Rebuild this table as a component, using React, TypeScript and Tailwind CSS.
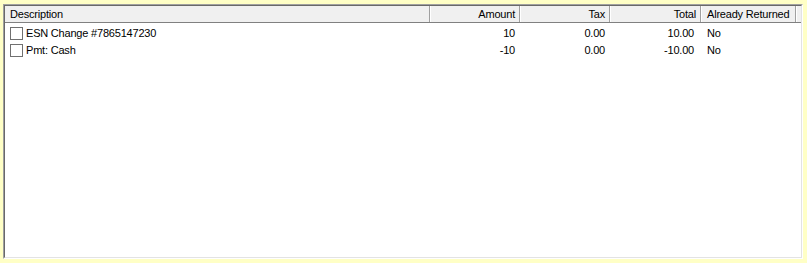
import React from "react";

const cols = [
  { label: "Description", w: 426, align: "left" },
  { label: "Amount", w: 90, align: "right" },
  { label: "Tax", w: 90, align: "right" },
  { label: "Total", w: 91, align: "right" },
  { label: "Already Returned", w: 95, align: "left" },
];

const rows = [
  ["ESN Change #7865147230", "10", "0.00", "10.00", "No"],
  ["Pmt: Cash", "-10", "0.00", "-10.00", "No"],
];

export default function App() {
  return (
    <div
      className="w-[807px] h-[263px] bg-[#ffffc6] pt-[4px] pl-[3px] pr-[4px] pb-[4px]"
      style={{ fontFamily: '"Liberation Sans", Arial, sans-serif' }}
    >
      <div className="w-[800px] h-[255px] border-t border-l border-t-[#a0a0a0] border-l-[#a0a0a0] border-b border-r border-b-[#ffffff] border-r-[#ffffff]">
        <div className="w-full h-full border-t border-l border-t-[#696969] border-l-[#696969] border-b border-r border-b-[#e3e3e3] border-r-[#e3e3e3] bg-white text-[11px] text-black tracking-[-0.2px]">
          <div className="flex h-[17px] bg-[#f0f0f0] border-b border-b-[#808080]">
            {cols.map((c) => (
              <div
                key={c.label}
                style={{ width: c.w }}
                className="flex h-full shrink-0"
              >
                <div
                  className={
                    "flex-1 flex items-center h-full leading-none pt-[1px] " +
                    (c.align === "right" ? "justify-end pr-[4px]" : "pl-[5px]")
                  }
                >
                  {c.label}
                </div>
                <div className="w-[1px] h-full bg-[#a0a0a0]" />
                <div className="w-[1px] h-full bg-white" />
              </div>
            ))}
            <div className="flex-1" />
          </div>
          <div className="pt-[2px]">
            {rows.map((r, i) => (
              <div key={i} className="flex h-[17px] items-center">
                <div style={{ width: 426 }} className="flex items-center shrink-0 pl-[5px]">
                  <div className="w-[13px] h-[13px] border border-[#707070] bg-white mr-[3px]" />
                  <span>{r[0]}</span>
                </div>
                <div style={{ width: 90 }} className="text-right pr-[6px] shrink-0">{r[1]}</div>
                <div style={{ width: 90 }} className="text-right pr-[6px] shrink-0">{r[2]}</div>
                <div style={{ width: 91 }} className="text-right pr-[8px] shrink-0">{r[3]}</div>
                <div style={{ width: 95 }} className="pl-[5px] shrink-0">{r[4]}</div>
              </div>
            ))}
          </div>
        </div>
      </div>
    </div>
  );
}
